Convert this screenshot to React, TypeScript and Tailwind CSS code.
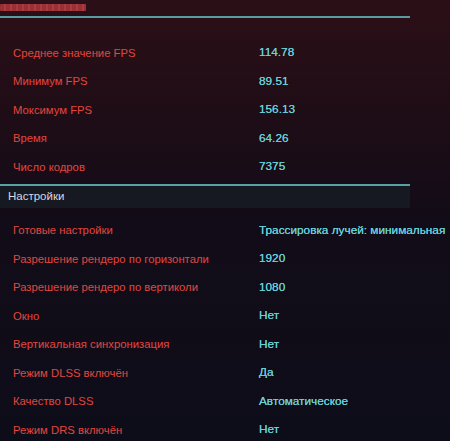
import React from "react";

const top = [
  ["Среднее значение FPS", "114.78"],
  ["Минимум FPS", "89.51"],
  ["Моксимум FPS", "156.13"],
  ["Время", "64.26"],
  ["Число кодров", "7375"],
];

const settings = [
  ["Готовые настройки", "Трассировка лучей: минимальная"],
  ["Разрешение рендеро по горизонтали", "1920"],
  ["Разрешение рендеро по вертиколи", "1080"],
  ["Окно", "Нет"],
  ["Вертикальная синхронизация", "Нет"],
  ["Режим DLSS включён", "Да"],
  ["Качество DLSS", "Автоматическое"],
  ["Режим DRS включён", "Нет"],
];

function Row({ label, value }: { label: string; value: string }) {
  return (
    <div className="flex h-[28.5px] items-center">
      <div className="w-[259px] shrink-0 pl-[13px] text-[11.3px] text-[#e3463f]">{label}</div>
      <div className="whitespace-nowrap text-[11.8px] text-[#66d0da] [text-shadow:0_0_0.3px_#66d0da]">
        {value}
      </div>
    </div>
  );
}

export default function App() {
  return (
    <div
      className="h-[441px] w-[450px] overflow-hidden bg-[linear-gradient(180deg,#2c0f17_0%,#1f0d16_25%,#120c18_50%,#0d0d19_100%)] text-[12px] leading-none"
      style={{ fontFamily: '"Liberation Sans", Arial, sans-serif' }}
    >
      <div className="pt-[4px]">
        <div className="h-[7px] w-[86px] rounded-[1px] bg-[repeating-linear-gradient(90deg,#9a3035_0px,#9a3035_4px,#a83c40_4px,#a83c40_6px)]" />
      </div>
      <div className="mt-[5px] h-[2px] w-[410px] bg-[#5a9aa2]" />
      <div className="pt-[21px]">
        {top.map(([l, v]) => (
          <Row key={l} label={l} value={v} />
        ))}
      </div>
      <div className="mt-[2px] h-[2px] w-[410px] bg-[#56a0a6]" />
      <div className="flex h-[22px] w-[410px] items-center bg-[#161822] pl-[8px] text-[11.5px] text-[#d6d9e0]">
        Настройки
      </div>
      <div className="pt-[9px]">
        {settings.map(([l, v]) => (
          <Row key={l} label={l} value={v} />
        ))}
      </div>
    </div>
  );
}
